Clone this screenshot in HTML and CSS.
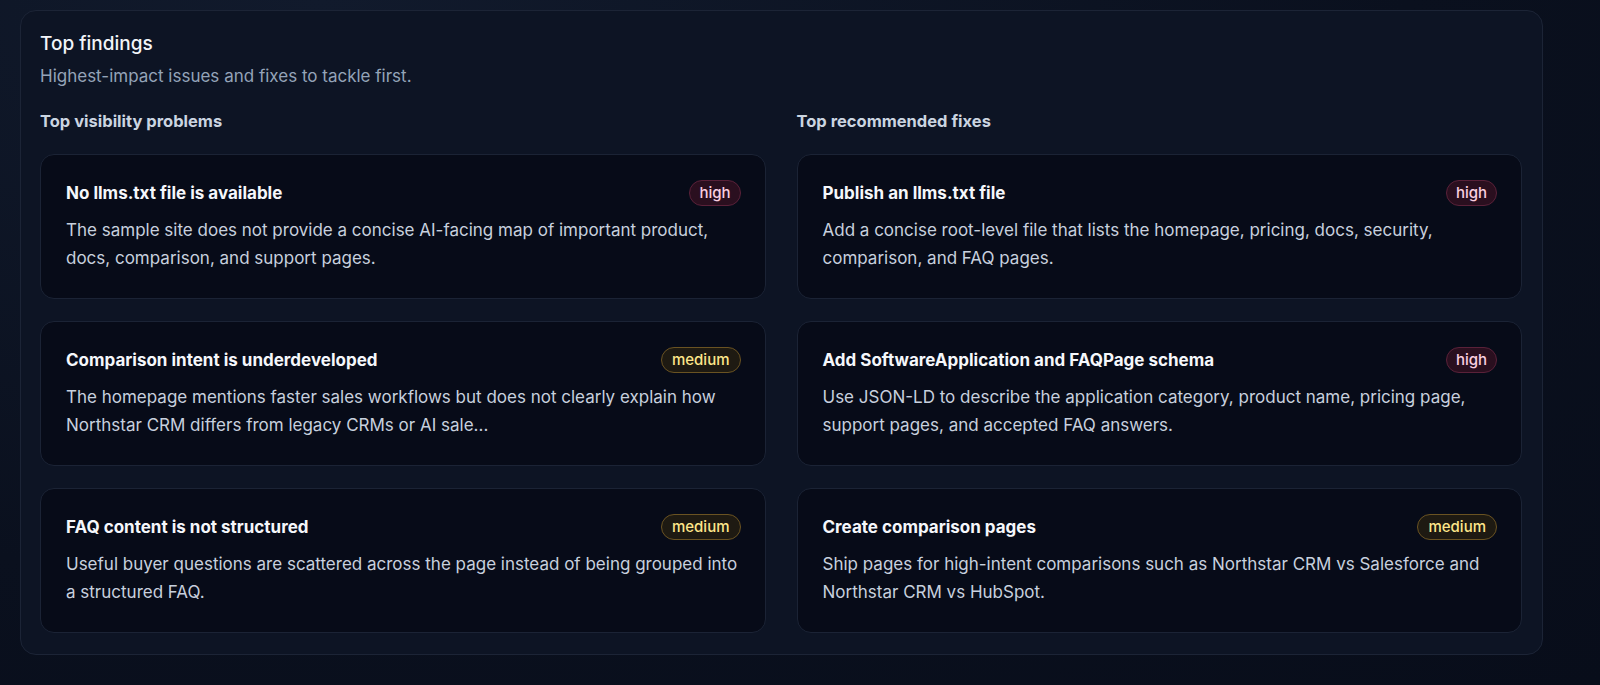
FILE: index.html
```html
<!DOCTYPE html>
<html>
  <head>
    <title>Top findings</title>
    <meta name="viewport" content="width=device-width, initial-scale=1" />
    <link rel="stylesheet" href="styles.css">
  </head>
  <body>
    <section class="panel">
      <h2>Top findings</h2>
      <p class="sub">Highest-impact issues and fixes to tackle first.</p>
      <div class="columns">
        <div class="col">
          <h3>Top visibility problems</h3>
          <div class="card">
            <div class="card-head">
              <h4>No llms.txt file is available</h4>
              <span class="badge high">high</span>
            </div>
            <p>The sample site does not provide a concise AI-facing map of important product, docs, comparison, and support pages.</p>
          </div>
          <div class="card">
            <div class="card-head">
              <h4>Comparison intent is underdeveloped</h4>
              <span class="badge medium">medium</span>
            </div>
            <p>The homepage mentions faster sales workflows but does not clearly explain how Northstar CRM differs from legacy CRMs or AI sale...</p>
          </div>
          <div class="card">
            <div class="card-head">
              <h4>FAQ content is not structured</h4>
              <span class="badge medium">medium</span>
            </div>
            <p>Useful buyer questions are scattered across the page instead of being grouped into a structured FAQ.</p>
          </div>
        </div>
        <div class="col">
          <h3>Top recommended fixes</h3>
          <div class="card">
            <div class="card-head">
              <h4>Publish an llms.txt file</h4>
              <span class="badge high">high</span>
            </div>
            <p>Add a concise root-level file that lists the homepage, pricing, docs, security, comparison, and FAQ pages.</p>
          </div>
          <div class="card">
            <div class="card-head">
              <h4>Add SoftwareApplication and FAQPage schema</h4>
              <span class="badge high">high</span>
            </div>
            <p>Use JSON-LD to describe the application category, product name, pricing page, support pages, and accepted FAQ answers.</p>
          </div>
          <div class="card">
            <div class="card-head">
              <h4>Create comparison pages</h4>
              <span class="badge medium">medium</span>
            </div>
            <p>Ship pages for high-intent comparisons such as Northstar CRM vs Salesforce and Northstar CRM vs HubSpot.</p>
          </div>
        </div>
      </div>
    </section>
  </body>
</html>
```

FILE: styles.css
```css
body {
  margin: 0;
  padding: 10px 57px 30px 20px;
  font-family: Inter, "Noto Sans", sans-serif;
  color: #e7eaf0;
  background: radial-gradient(ellipse at 20% 0%, #111a2c 0%, #0a101e 60%, #080d1a 100%);
  min-height: 685px;
  box-sizing: border-box;
}
.panel {
  background-color: #0d1424;
  border: 1px solid #1c2436;
  border-radius: 16px;
  padding: 19px 20px 21px 19px;
}
h2 {
  margin: 0;
  font-size: 19px;
  font-weight: 500;
  line-height: 28px;
  color: #f3f5f9;
}
.sub {
  margin: 5px 0 0;
  font-size: 17px;
  line-height: 26px;
  color: #94a3b8;
}
.columns {
  display: grid;
  grid-template-columns: 1fr 1fr;
  gap: 31px;
  margin-top: 20px;
}
h3 {
  margin: 0 0 21px;
  font-size: 16.5px;
  font-weight: 700;
  line-height: 24px;
  color: #cbd5e1;
}
.card {
  background-color: #070b18;
  border: 1px solid #1b2335;
  border-radius: 14px;
  padding: 24px 24px 21px 25px;
  margin-bottom: 22px;
  height: 145px;
  box-sizing: border-box;
}
.col .card:last-child {
  margin-bottom: 0;
}
.card-head {
  display: flex;
  justify-content: space-between;
  align-items: center;
  height: 28px;
}
h4 {
  margin: 0;
  font-size: 17px;
  font-weight: 700;
  color: #f5f7fb;
}
.card p {
  margin: 9px 0 0;
  font-size: 17px;
  line-height: 28px;
  color: #c7d0de;
}
.badge {
  font-size: 15px;
  font-weight: 500;
  line-height: 20px;
  padding: 2px 9px;
  border-radius: 999px;
  border: 1px solid;
}
.badge.medium {
  padding: 2px 10px;
}
.badge.high {
  background-color: #2a0f1f;
  border-color: #5a2139;
  color: #fbcfe0;
}
.badge.medium {
  background-color: #1e1a12;
  border-color: #6a5322;
  color: #fde68a;
}
```
